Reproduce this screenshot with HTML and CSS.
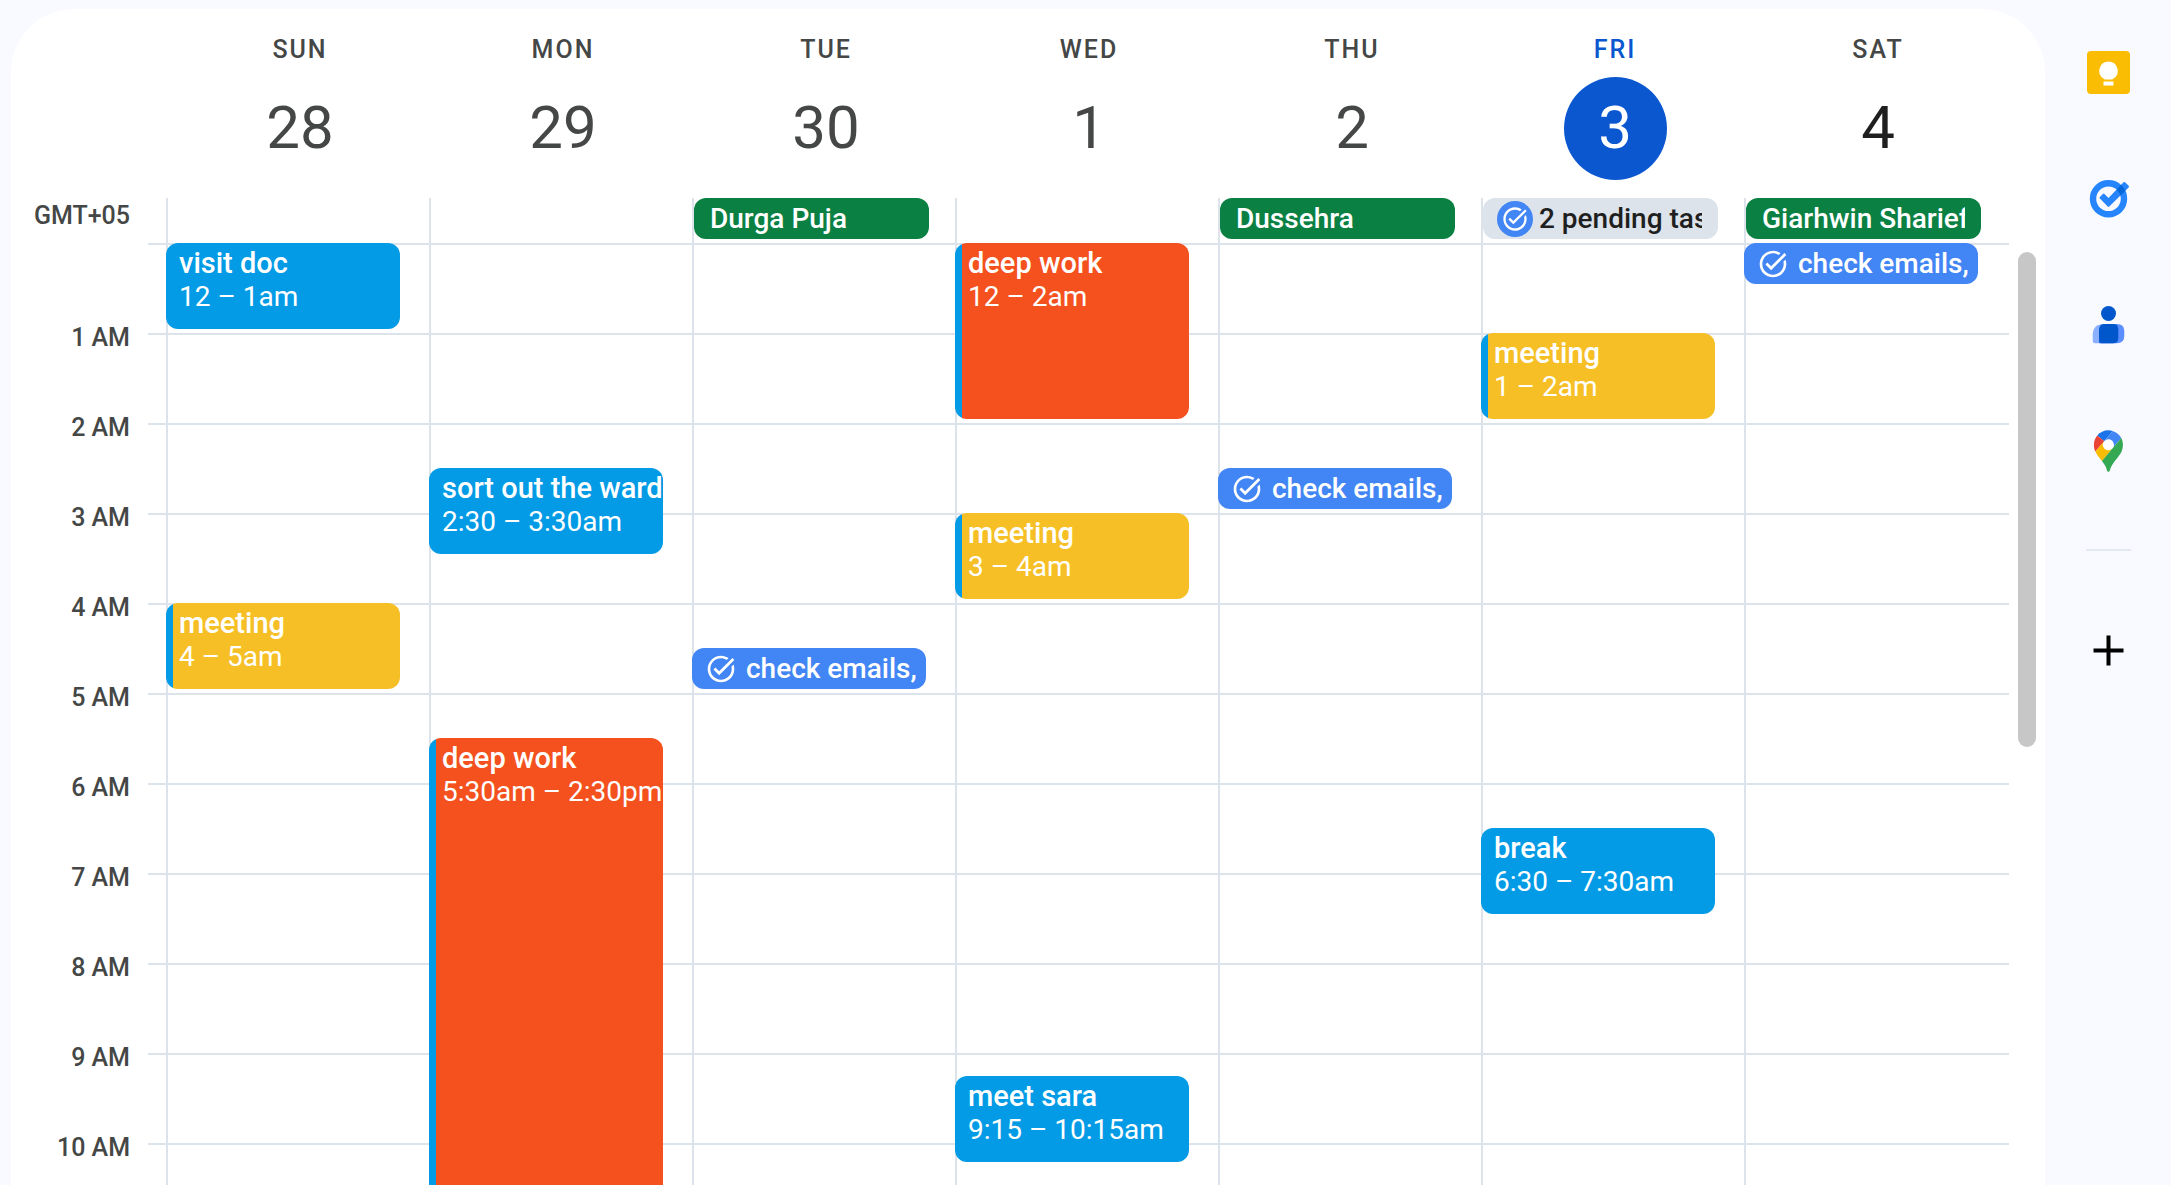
FILE: index.html
```html
<!DOCTYPE html>
<html lang="en">
<head>
<meta charset="utf-8">
<meta name="viewport" content="width=device-width, initial-scale=1">
<title>Calendar</title>
<link rel="stylesheet" href="styles.css">
</head>
<body>
<svg class="defs" aria-hidden="true">
  <symbol id="task" viewBox="0 0 24 24"><path fill="currentColor" d="M22 5.18L10.59 16.6l-4.24-4.24 1.41-1.41 2.83 2.83 10-10L22 5.18zm-2.21 5.04c.13.57.21 1.17.21 1.78 0 4.42-3.58 8-8 8s-8-3.58-8-8 3.58-8 8-8c1.58 0 3.04.46 4.28 1.25l1.44-1.44C16.1 2.67 14.13 2 12 2 6.48 2 2 6.48 2 12s4.48 10 10 10 10-4.48 10-10c0-1.19-.22-2.33-.6-3.39l-1.61 1.61z"/></symbol>
</svg>
<div class="app">
  <main class="calendar">
    <header class="week">
      <div class="week-day"><span class="week-name">SUN</span><button class="week-date">28</button></div>
      <div class="week-day"><span class="week-name">MON</span><button class="week-date">29</button></div>
      <div class="week-day"><span class="week-name">TUE</span><button class="week-date">30</button></div>
      <div class="week-day"><span class="week-name">WED</span><button class="week-date">1</button></div>
      <div class="week-day"><span class="week-name">THU</span><button class="week-date">2</button></div>
      <div class="week-day today"><span class="week-name">FRI</span><button class="week-date">3</button></div>
      <div class="week-day future"><span class="week-name">SAT</span><button class="week-date">4</button></div>
    </header>

    <section class="allday">
      <div class="zone">GMT+05</div>
      <div class="allday-days">
        <div class="day"></div>
        <div class="day"></div>
        <div class="day"><button class="chip holiday"><span class="clip">Durga Puja</span></button></div>
        <div class="day"></div>
        <div class="day"><button class="chip holiday"><span class="clip">Dussehra</span></button></div>
        <div class="day"><button class="chip pending"><span class="badge"><svg class="badge-icon"><use href="#task"/></svg></span><span class="clip">2 pending tasks</span></button></div>
        <div class="day"><button class="chip holiday"><span class="clip">Giarhwin Sharief</span></button></div>
      </div>
    </section>

    <section class="schedule">
      <ul class="hours">
        <li>1 AM</li><li>2 AM</li><li>3 AM</li><li>4 AM</li><li>5 AM</li>
        <li>6 AM</li><li>7 AM</li><li>8 AM</li><li>9 AM</li><li>10 AM</li>
      </ul>
      <div class="days">
        <div class="day">
          <button class="event blue" style="grid-row: 1 / span 4"><span class="title">visit doc</span><span>12 – 1am</span></button>
          <button class="event yellow" style="grid-row: 17 / span 4"><span class="title">meeting</span><span>4 – 5am</span></button>
        </div>
        <div class="day">
          <button class="event blue" style="grid-row: 11 / span 4"><span class="title">sort out the wardrobe</span><span>2:30 – 3:30am</span></button>
          <button class="event orange" style="grid-row: 23 / span 36"><span class="title">deep work</span><span>5:30am – 2:30pm</span></button>
        </div>
        <div class="day">
          <button class="event task" style="grid-row: 19 / span 2"><svg class="task-icon"><use href="#task"/></svg><span>check emails,</span></button>
        </div>
        <div class="day">
          <button class="event orange" style="grid-row: 1 / span 8"><span class="title">deep work</span><span>12 – 2am</span></button>
          <button class="event yellow" style="grid-row: 13 / span 4"><span class="title">meeting</span><span>3 – 4am</span></button>
          <button class="event blue" style="grid-row: 38 / span 4"><span class="title">meet sara</span><span>9:15 – 10:15am</span></button>
        </div>
        <div class="day">
          <button class="event task" style="grid-row: 11 / span 2"><svg class="task-icon"><use href="#task"/></svg><span>check emails,</span></button>
        </div>
        <div class="day">
          <button class="event yellow" style="grid-row: 5 / span 4"><span class="title">meeting</span><span>1 – 2am</span></button>
          <button class="event blue" style="grid-row: 27 / span 4"><span class="title">break</span><span>6:30 – 7:30am</span></button>
        </div>
        <div class="day">
          <button class="event task" style="grid-row: 1 / span 2"><svg class="task-icon"><use href="#task"/></svg><span>check emails,</span></button>
        </div>
      </div>
      <div class="scroll"><div class="thumb"></div></div>
    </section>
  </main>

  <aside class="side">
    <button class="side-button" aria-label="Keep">
      <svg viewBox="0 0 45 45"><rect x="1" y="1" width="43" height="43" rx="4" fill="#fbbc04"/><path fill="#fff" d="M22.500 11.500a9.300 9.300 0 0 0-5 17.100c.5.500 1 .9 1.500.9h7c.5 0 1-.4 1.500-.9a9.300 9.300 0 0 0-5-17.100zM17.500 31.500h10v4h-10z"/></svg>
    </button>
    <button class="side-button" aria-label="Tasks">
      <svg viewBox="0 0 45 45">
        <clipPath id="check"><path d="M13.900 22.600q-.8-.8 0-1.600l3-3q.8-.8 1.600 0l4 4L37.500 6.300q.8-.8 1.600 0l3.500 3.500q.8.800 0 1.600L23.300 30.500q-.8.800-1.600 0z"/></clipPath>
        <circle cx="22.500" cy="22.800" r="15.500" fill="none" stroke="#2684fc" stroke-width="6.400"/>
        <rect width="45" height="45" fill="#2684fc" clip-path="url(#check)"/>
        <g clip-path="url(#check)"><circle cx="22.500" cy="22.800" r="15.500" fill="none" stroke="#0066da" stroke-width="6.400"/></g>
      </svg>
    </button>
    <button class="side-button" aria-label="Contacts">
      <svg viewBox="0 0 45 45"><path fill="#8ab0ff" d="M18 22h9v19.200H9q-2.300 0-2.300-2.300v-5.600Q6.700 22 18 22z"/><path fill="#5c8eff" d="M18 22h13q7.300 0 7.300 7.300v4.600q0 7.300-7.300 7.300H13V28z"/><path fill="#0057cc" d="M18.500 22h8.500q5.300 0 5.300 5.300v8.600q0 5.300-5.300 5.300H15.500q-2.500 0-2.500-2.500v-11q0-5.700 5.500-5.700z"/><circle cx="22.500" cy="11.500" r="7.500" fill="#0057cc"/></svg>
    </button>
    <button class="side-button" aria-label="Maps">
      <svg viewBox="0 0 45 45"><g transform="translate(7.900 2.200) scale(.314)"><circle cx="46.200" cy="46.200" r="20" fill="#fff"/><path fill="#1a73e8" d="M60.200 2.200C55.800.8 51 0 46.100 0 32 0 19.300 6.400 10.800 16.500l21.800 18.300L60.200 2.200z"/><path fill="#ea4335" d="M10.800 16.500C4.100 24.500 0 34.900 0 46.100c0 8.700 1.700 15.700 4.600 22l28-33.300-21.800-18.300z"/><path fill="#4285f4" d="M46.200 28.500c9.800 0 17.700 7.900 17.700 17.700 0 4.300-1.600 8.300-4.200 11.400 0 0 13.900-16.600 27.500-32.700-5.600-10.800-15.300-19-27-22.700L32.600 34.800c3.300-3.800 8.100-6.300 13.600-6.300"/><path fill="#fbbc04" d="M46.200 63.800c-9.800 0-17.700-7.900-17.700-17.700 0-4.300 1.500-8.300 4.100-11.300l-28 33.300c4.800 10.600 12.800 19.200 21 29.900l34.100-40.500c-3.300 3.900-8.100 6.300-13.500 6.300"/><path fill="#34a853" d="M59.100 109.200c15.400-24.100 33.300-35 33.300-63 0-7.700-1.900-14.900-5.200-21.300L25.600 98c2.600 3.400 5.300 7.300 7.900 11.300 9.400 14.500 6.800 23.100 12.800 23.100s3.400-8.700 12.800-23.200"/></g></svg>
    </button>
    <hr class="side-rule">
    <button class="side-button" aria-label="Get add-ons">
      <svg viewBox="0 0 45 45"><path d="M22.500 7.500v30M7.500 22.500h30" stroke="#000" stroke-width="4"/></svg>
    </button>
  </aside>
</div>
</body>
</html>
```

FILE: styles.css
```css
:root {
  --hour: 90px;
  --gutter: 137px;
  --tick: 18px;
  --rail: 36px;
  --line: #dde3ea;
}

* { box-sizing: border-box; }

body {
  margin: 0;
  background: #f8faff;
  color: #444746;
  font-family: Roboto, "Liberation Sans", sans-serif;
  font-size: 28px;
}

button {
  margin: 0;
  padding: 0;
  border: 0;
  background: none;
  color: inherit;
  font: inherit;
  text-align: left;
  cursor: pointer;
}

.defs { display: none; }

.app {
  display: flex;
  height: 100vh;
  overflow: hidden;
}

.calendar {
  flex: 1;
  min-width: 0;
  display: flex;
  flex-direction: column;
  margin: 9px 0 0 11px;
  border-radius: 63px 63px 0 0;
  background: #fff;
  overflow: hidden;
}

/* Week header */
.week {
  display: grid;
  grid-template-columns: repeat(7, minmax(0, 1fr));
  margin-right: var(--rail);
  padding: 26px 2px 18px calc(var(--gutter) + var(--tick));
}

.week-day {
  display: flex;
  flex-direction: column;
  align-items: center;
  gap: 12px;
  padding-left: 5px;
}

.week-name {
  font-size: 25px;
  font-weight: 500;
  line-height: 30px;
  letter-spacing: 2px;
}

.week-date {
  width: 103px;
  height: 103px;
  padding-bottom: 2px;
  border-radius: 50%;
  font-size: 60px;
  text-align: center;
}

.today .week-name { color: #0b57d0; }
.today .week-date { background: #0b57d0; color: #fff; }
.future .week-date { color: #1f1f1f; }

/* All-day row */
.allday {
  display: flex;
  padding-right: var(--rail);
}

.zone {
  width: var(--gutter);
  padding-right: var(--tick);
  font-size: 25px;
  font-weight: 500;
  line-height: 36px;
  text-align: right;
}

.allday-days {
  flex: 1;
  display: grid;
  grid-template-columns: repeat(7, minmax(0, 1fr));
  min-height: 45px;
  padding: 0 2px 0 var(--tick);
}

.day {
  min-width: 0;
  border-left: 2px solid var(--line);
}

.chip {
  display: flex;
  align-items: center;
  width: calc(100% - 26px);
  height: 41px;
  padding: 0 16px;
  border-radius: 12px;
  font-weight: 500;
  line-height: 41px;
}

.clip {
  min-width: 0;
  overflow: hidden;
  white-space: nowrap;
}

.holiday { background: #0b8043; color: #fff; }

.pending {
  gap: 6px;
  padding-left: 14px;
  background: var(--line);
  color: #1f1f1f;
}

.badge {
  display: flex;
  flex: none;
  align-items: center;
  justify-content: center;
  width: 36px;
  height: 36px;
  border-radius: 50%;
  background: #4285f4;
  color: #fff;
}

.badge-icon { width: 28px; height: 28px; }

/* Timed grid */
.schedule {
  flex: 1;
  display: flex;
  min-height: 0;
  overflow: hidden;
}

.hours {
  width: var(--gutter);
  margin: 0;
  padding: 50px var(--tick) 0 0;
  list-style: none;
  font-size: 25px;
  font-weight: 500;
  line-height: var(--hour);
  text-align: right;
}

.days {
  flex: 1;
  display: grid;
  grid-template-columns: repeat(7, minmax(0, 1fr));
  height: calc(var(--hour) * 15);
  padding: 0 2px 0 var(--tick);
  background: repeating-linear-gradient(to bottom, var(--line) 0 2px, transparent 2px var(--hour));
}

.days .day {
  display: grid;
  grid-template-columns: minmax(0, 1fr);
  grid-template-rows: repeat(60, minmax(0, 1fr));
}

.event {
  display: flex;
  flex-direction: column;
  margin: 0 29px 4px -2px;
  padding: 4px 0 0 13px;
  border-radius: 12px;
  color: #fff;
  line-height: 33px;
  white-space: nowrap;
  overflow: hidden;
}

.title {
  font-size: 29px;
  font-weight: 500;
}

.blue { background: #039be5; }
.yellow { background: linear-gradient(to right, #039be5 7px, #f6bf26 7px); }
.orange { background: linear-gradient(to right, #039be5 7px, #f4511e 7px); }

.task {
  flex-direction: row;
  align-items: center;
  gap: 9px;
  padding-top: 0;
  background: #4285f4;
  font-weight: 500;
}

.task-icon { flex: none; width: 32px; height: 32px; }

.scroll {
  width: var(--rail);
  padding: 9px 9px 0;
}

.thumb {
  height: 495px;
  border-radius: 9px;
  background: #c7c7c7;
}

/* Side panel */
.side {
  display: flex;
  flex-direction: column;
  align-items: center;
  width: 126px;
  padding-top: 9px;
}

.side-button {
  display: flex;
  align-items: center;
  justify-content: center;
  width: 100%;
  height: 126px;
}

.side-button svg { width: 45px; height: 45px; }

.side-rule {
  width: 45px;
  height: 2px;
  margin: 36px 0;
  border: 0;
  background: #e3eaef;
}
```
